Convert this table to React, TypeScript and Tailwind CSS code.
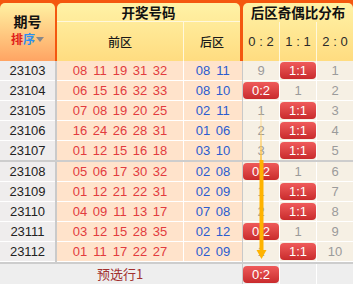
import React from 'react';

// draw history rows: id, front zone, back zone, back-zone odd/even ratio (0 = 0:2, 1 = 1:1, 2 = 2:0), misses
const rows = [
  { id: '23103', front: ['08', '11', '19', '31', '32'], back: ['08', '11'], hit: 1, miss: ['9', '', '1'] },
  { id: '23104', front: ['06', '15', '16', '32', '33'], back: ['08', '10'], hit: 0, miss: ['', '1', '2'] },
  { id: '23105', front: ['07', '08', '19', '20', '25'], back: ['02', '11'], hit: 1, miss: ['1', '', '3'] },
  { id: '23106', front: ['16', '24', '26', '28', '31'], back: ['01', '06'], hit: 1, miss: ['2', '', '4'] },
  { id: '23107', front: ['01', '12', '15', '16', '18'], back: ['03', '10'], hit: 1, miss: ['3', '', '5'] },
  { id: '23108', front: ['05', '06', '17', '30', '32'], back: ['02', '08'], hit: 0, miss: ['', '1', '6'] },
  { id: '23109', front: ['01', '12', '21', '22', '31'], back: ['02', '09'], hit: 1, miss: ['1', '', '7'] },
  { id: '23110', front: ['04', '09', '11', '13', '17'], back: ['07', '08'], hit: 1, miss: ['2', '', '8'] },
  { id: '23111', front: ['03', '12', '15', '28', '35'], back: ['02', '12'], hit: 0, miss: ['', '1', '9'] },
  { id: '23112', front: ['01', '11', '17', '22', '27'], back: ['02', '09'], hit: 1, miss: ['1', '', '10'] },
];

const labels = ['0:2', '1:1', '2:0'];

const Badge = ({ text }: { text: string }) => (
  <div className="w-[36px] h-[17px] rounded-[4px] bg-linear-to-b from-[#ef5a5a] to-[#c92a2c] text-white text-[13px] leading-[17px] text-center">
    {text}
  </div>
);

const Row = ({ r, last }: any) => {
  const cellB = last ? '' : 'border-b border-white';
  return (
    <div className={`flex ${last ? 'h-[19px]' : 'h-[20px]'}`}>
      <div className={`w-[55px] bg-[#efeded] flex items-center justify-center text-[13px] text-[#222] ${cellB}`}>{r.id}</div>
      <div className="w-[2px] bg-[#cacaca]" />
      <div className={`w-[126px] bg-[#ffe3cb] flex items-center justify-center text-[13px] text-[#e23b3e] ${cellB}`}>
        {r.front.map((n: string, i: number) => (
          <span key={i} className="w-[20px] text-center">{n}</span>
        ))}
      </div>
      <div className="w-[1px] bg-white" />
      <div className={`w-[58px] bg-[#ffe3cb] flex items-center justify-center text-[13px] text-[#2b5ccf] ${cellB}`}>
        {r.back.map((n: string, i: number) => (
          <span key={i} className="w-[20px] text-center">{n}</span>
        ))}
      </div>
      <div className="w-[1px] bg-[#c9c9c9]" />
      {[0, 1, 2].map((c) => (
        <React.Fragment key={c}>
          {c > 0 && <div className="w-[1px] bg-white" />}
          <div className={`w-[36px] bg-[#f6f0e4] flex items-center justify-center text-[13px] text-[#9b9b9b] ${cellB}`}>
            {r.hit === c ? <Badge text={labels[c]} /> : r.miss[c]}
          </div>
        </React.Fragment>
      ))}
    </div>
  );
};

export default function App() {
  return (
    <div className="relative w-[353px] h-[284px] overflow-hidden bg-white" style={{ fontFamily: '"Liberation Sans", "Noto Sans CJK SC", sans-serif' }}>
      {/* header */}
      <div className="flex bg-[#f4570f] pt-[3px] h-[61px]">
        <div className="w-[55px] rounded-t-[5px] bg-linear-to-b from-[#fff1a2] to-[#ffa463] flex flex-col items-center pt-[9px]" style={{ fontFamily: '"Noto Sans CJK SC", sans-serif' }}>
          <div className="h-[19px] text-[14px] leading-[19px] font-bold text-[#111]">期号</div>
          <div className="h-[16px] flex items-center text-[12px] leading-[16px] font-bold">
            <span className="text-[#e0201c]">排</span>
            <span className="text-[#2d8fef]">序</span>
            <span className="ml-[1px] w-0 h-0 border-l-[4px] border-r-[4px] border-t-[5px] border-l-transparent border-r-transparent border-t-[#888]" />
          </div>
        </div>
        <div className="w-[2px]" />
        <div className="w-[183px] rounded-t-[5px] bg-linear-to-b from-[#fff2a6] to-[#ffdc80] flex flex-col" style={{ fontFamily: '"Noto Sans CJK SC", sans-serif' }}>
          <div className="h-[18px] flex items-center justify-center text-[13.5px] font-bold text-[#111]">开奖号码</div>
          <div className="h-[1px] bg-[#fff8dc]" />
          <div className="flex flex-1">
            <div className="w-[126px] flex items-center justify-center text-[12px] font-medium text-[#1a1a1a]">前区</div>
            <div className="w-[1px] bg-[#fff8dc]" />
            <div className="flex-1 flex items-center justify-center text-[12px] font-medium text-[#1a1a1a]">后区</div>
          </div>
        </div>
        <div className="w-[3px]" />
        <div className="w-[110px] rounded-t-[5px] bg-linear-to-b from-[#fff2a6] to-[#ffdc80] flex flex-col">
          <div className="h-[18px] flex items-center justify-center text-[13.5px] font-bold text-[#111]" style={{ fontFamily: '"Noto Sans CJK SC", sans-serif' }}>后区奇偶比分布</div>
          <div className="h-[1px]" />
          <div className="flex flex-1 text-[13px] text-[#2a2a2a]">
            <div className="w-[36px] flex items-center justify-center">0 : 2</div>
            <div className="w-[1px] bg-[#fff8dc]" />
            <div className="w-[36px] flex items-center justify-center">1 : 1</div>
            <div className="w-[1px] bg-[#fff8dc]" />
            <div className="w-[36px] flex items-center justify-center">2 : 0</div>
          </div>
        </div>
      </div>

      {/* rows */}
      {rows.slice(0, 5).map((r, i) => <Row key={r.id} r={r} last={i === 4} />)}
      <div className="h-[2px] bg-[#cdcdcd]" />
      {rows.slice(5).map((r) => <Row key={r.id} r={r} />)}
      <div className="h-[2px] bg-[#cdcdcd]" />

      {/* footer */}
      <div className="flex h-[20px] bg-[#eeeeee]">
        <div className="w-[57px]" />
        <div className="w-[126px] flex items-center justify-center text-[13px] text-[#a2302f]" style={{ fontFamily: '"Noto Sans CJK SC", sans-serif' }}>预选行1</div>
        <div className="w-[59px]" />
        <div className="w-[1px] bg-[#c9c9c9]" />
        <div className="w-[36px] flex items-center justify-center"><Badge text="0:2" /></div>
        <div className="w-[1px] bg-white" />
        <div className="w-[36px]" />
        <div className="w-[1px] bg-white" />
        <div className="w-[36px]" />
      </div>

      {/* trend arrow */}
      <svg className="absolute left-0 top-0 pointer-events-none" width="353" height="284">
        <defs>
          <linearGradient id="fade" x1="0" y1="0" x2="0" y2="1">
            <stop offset="0" stopColor="#ffd27a" stopOpacity="0.2" />
            <stop offset="1" stopColor="#ffc13a" stopOpacity="0.8" />
          </linearGradient>
        </defs>
        <rect x="260" y="112" width="2" height="48" fill="url(#fade)" />
        <rect x="259.5" y="160" width="4" height="91" fill="#ffb300" />
        <polygon points="256.5,250 266.5,250 261.5,259" fill="#ffb300" />
      </svg>
    </div>
  );
}
